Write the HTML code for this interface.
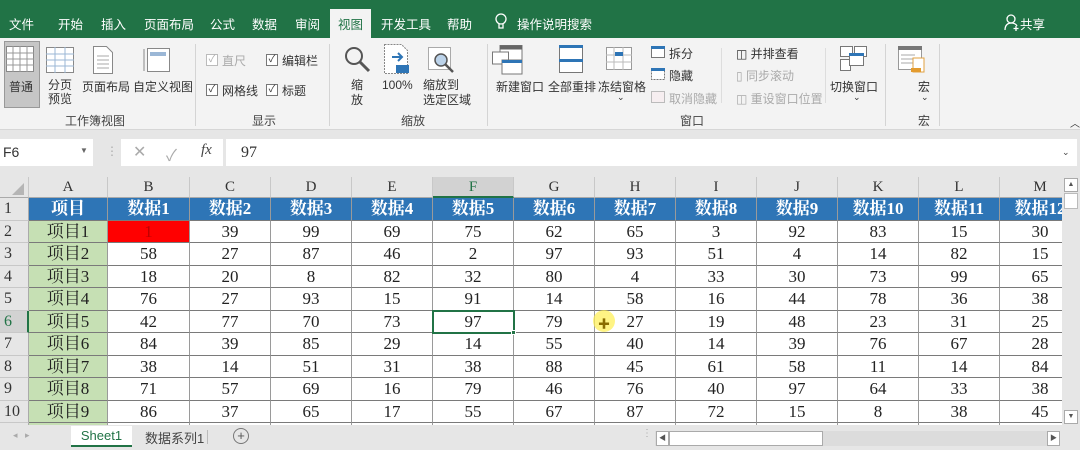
<!DOCTYPE html>
<html><head><meta charset="utf-8">
<style>
*{margin:0;padding:0;box-sizing:border-box}
body{width:1080px;height:450px;overflow:hidden;background:#e6e6e6;position:relative;font-family:"Liberation Sans","Noto Sans CJK SC",sans-serif;}
.a{position:absolute;white-space:nowrap}
.tab{position:absolute;top:14px;font-size:12.5px;color:#fff}
.rb{font-size:12px;color:#333}
.dim{color:#aaa}
.sep{position:absolute;top:44px;width:1px;height:82px;background:#d4d4d4}
.grp{position:absolute;top:112px;font-size:12px;color:#444}
.cb{position:absolute;width:12px;height:12px;border:1px solid #777;background:#fff;font-size:10px;line-height:10px;text-align:center;color:#333}
#grid{position:absolute;left:0;top:177px;width:1062px;height:248px;background:#fff;overflow:hidden}
.c{position:absolute;text-align:center;font-family:"Liberation Serif","Noto Serif CJK SC",serif;font-size:17px;color:#222;border-right:1px solid #9a9a9a;border-bottom:1px solid #7a7a7a;line-height:22px}
.ch{position:absolute;top:0;height:21px;text-align:center;font-family:"Liberation Serif",serif;font-size:15px;color:#333;background:#e6e6e6;border-right:1px solid #c8c8c8;border-bottom:1px solid #aaa;line-height:21px}
.rh{position:absolute;left:0;width:29px;text-align:left;padding-left:4px;font-family:"Liberation Serif",serif;font-size:16px;color:#333;background:#e6e6e6;border-bottom:1px solid #c8c8c8;border-right:1px solid #aaa;line-height:22px}
</style></head><body>
<!-- title / tabs -->
<div class="a" style="left:0;top:0;width:1080px;height:38px;background:#217346"></div>
<div class="a" style="left:330px;top:9px;width:41px;height:30px;background:#f3f3f3"></div>
<div class="tab" style="left:9px">文件</div>
<div class="tab" style="left:58px">开始</div>
<div class="tab" style="left:101px">插入</div>
<div class="tab" style="left:144px">页面布局</div>
<div class="tab" style="left:210px">公式</div>
<div class="tab" style="left:252px">数据</div>
<div class="tab" style="left:295px">审阅</div>
<div class="tab" style="left:330px;color:#217346;width:41px;text-align:center">视图</div>
<div class="tab" style="left:381px">开发工具</div>
<div class="tab" style="left:447px">帮助</div>
<svg class="a" style="left:494px;top:13px" width="14" height="18"><circle cx="7" cy="6" r="5" fill="none" stroke="#fff" stroke-width="1.3"/><path d="M5 11v4h4v-4" fill="none" stroke="#fff" stroke-width="1.3"/></svg>
<div class="tab" style="left:517px">操作说明搜索</div>
<svg class="a" style="left:1004px;top:14px" width="16" height="18"><circle cx="7" cy="5" r="4" fill="none" stroke="#fff" stroke-width="1.3"/><path d="M1 16c0-5 3-7 6-7s5 1 6 3M12 12v5M9.5 14.5h5" fill="none" stroke="#fff" stroke-width="1.3"/></svg>
<div class="tab" style="left:1020px">共享</div>
<!-- ribbon -->
<div class="a" style="left:0;top:38px;width:1080px;height:92px;background:#f3f3f3;border-bottom:1px solid #d6d6d6"></div>
<div class="a" style="left:4px;top:41px;width:36px;height:67px;background:#c6c6c6;border:1px solid #999"></div>
<svg class="a" style="left:6px;top:46px" width="28" height="26"><rect x="0.5" y="0.5" width="27" height="25" fill="#fff" stroke="#888"/><path d="M0 7h28M0 13h28M0 19h28M7 0v26M14 0v26M21 0v26" stroke="#999"/></svg>
<div class="a rb" style="left:9px;top:78px">普通</div>
<svg class="a" style="left:46px;top:47px" width="28" height="26"><rect x="0.5" y="0.5" width="27" height="25" fill="#fff" stroke="#888"/><path d="M0 7h28M0 13h28M0 19h28M9 0v26M19 0v26" stroke="#9bb7d6"/></svg>
<div class="a rb" style="left:48px;top:78px;line-height:14px">分页<br>预览</div>
<svg class="a" style="left:93px;top:46px" width="20" height="28"><path d="M0.5 0.5h13l6 6v21h-19z" fill="#fff" stroke="#888"/><path d="M4 10h12M4 14h12M4 18h12M4 22h12" stroke="#aaa"/></svg>
<div class="a rb" style="left:82px;top:78px">页面布局</div>
<svg class="a" style="left:143px;top:46px" width="28" height="28"><rect x="4.5" y="2.5" width="22" height="23" fill="#fff" stroke="#888"/><rect x="7" y="6" width="16" height="4" fill="#9bb7d6"/><path d="M1 3v22" stroke="#888"/></svg>
<div class="a rb" style="left:133px;top:78px">自定义视图</div>
<div class="grp" style="left:65px">工作簿视图</div>
<div class="sep" style="left:195px"></div>
<div class="cb" style="left:206px;top:54px;border-color:#bbb;color:#aaa">✓</div><div class="a rb dim" style="left:222px;top:52px">直尺</div>
<div class="cb" style="left:266px;top:54px">✓</div><div class="a rb" style="left:282px;top:52px">编辑栏</div>
<div class="cb" style="left:206px;top:84px">✓</div><div class="a rb" style="left:222px;top:82px">网格线</div>
<div class="cb" style="left:266px;top:84px">✓</div><div class="a rb" style="left:282px;top:82px">标题</div>
<div class="grp" style="left:252px">显示</div>
<div class="sep" style="left:329px"></div>
<svg class="a" style="left:344px;top:46px" width="28" height="28"><circle cx="10" cy="10" r="8" fill="none" stroke="#555" stroke-width="2"/><path d="M16 16l9 9" stroke="#555" stroke-width="3"/></svg>
<div class="a rb" style="left:351px;top:78px;line-height:15px">缩<br>放</div>
<svg class="a" style="left:384px;top:44px" width="26" height="30"><path d="M0.5 0.5h17l6 6v23h-23z" fill="#fff" stroke="#888" stroke-dasharray="2 1"/><path d="M8 13h10M14 9l4 4-4 4" stroke="#2e75b6" stroke-width="2" fill="none"/><rect x="12" y="21" width="13" height="8" fill="#2e75b6"/></svg>
<div class="a rb" style="left:382px;top:78px">100%</div>
<svg class="a" style="left:428px;top:47px" width="28" height="28"><rect x="0.5" y="0.5" width="22" height="22" fill="#fff" stroke="#aaa"/><circle cx="13" cy="13" r="6" fill="#bcd3ea" stroke="#555" stroke-width="1.5"/><path d="M17 17l8 8" stroke="#555" stroke-width="2.5"/></svg>
<div class="a rb" style="left:423px;top:78px;line-height:15px">缩放到<br>选定区域</div>
<div class="grp" style="left:401px">缩放</div>
<div class="sep" style="left:487px"></div>
<svg class="a" style="left:492px;top:45px" width="32" height="30"><rect x="8" y="0.5" width="22" height="16" fill="#fff" stroke="#777"/><rect x="8" y="0.5" width="22" height="4" fill="#666"/><rect x="0.5" y="7" width="16" height="12" fill="#fff" stroke="#777"/><rect x="10" y="15" width="20" height="14" fill="#fff" stroke="#777"/><rect x="10" y="15" width="20" height="3" fill="#2e75b6"/></svg>
<div class="a rb" style="left:496px;top:78px">新建窗口</div>
<svg class="a" style="left:559px;top:45px" width="24" height="28"><rect x="0.5" y="0.5" width="23" height="27" fill="#fff" stroke="#777"/><rect x="0" y="0" width="24" height="3" fill="#2e75b6"/><rect x="0" y="14" width="24" height="3" fill="#2e75b6"/></svg>
<div class="a rb" style="left:548px;top:78px">全部重排</div>
<svg class="a" style="left:606px;top:47px" width="28" height="26"><rect x="0.5" y="0.5" width="25" height="22" fill="#fff" stroke="#999"/><path d="M0 8h26M0 15h26M8 0v23M17 0v23" stroke="#bbb"/><rect x="9" y="5" width="8" height="4" fill="#2e75b6"/></svg>
<div class="a rb" style="left:598px;top:78px">冻结窗格</div>
<div class="a rb" style="left:617px;top:92px;font-size:9px">⌄</div>
<svg class="a" style="left:651px;top:46px" width="14" height="12"><rect x="0.5" y="0.5" width="13" height="11" fill="#fff" stroke="#777"/><rect x="0" y="0" width="14" height="3" fill="#2e75b6"/></svg><div class="a rb" style="left:669px;top:45px">拆分</div>
<svg class="a" style="left:651px;top:68px" width="14" height="12"><rect x="0.5" y="0.5" width="13" height="11" fill="#fff" stroke="#777" stroke-dasharray="2 1"/><rect x="0" y="0" width="14" height="3" fill="#2e75b6"/></svg><div class="a rb" style="left:669px;top:67px">隐藏</div>
<svg class="a" style="left:651px;top:91px" width="14" height="12"><rect x="0.5" y="0.5" width="13" height="11" fill="#f6eef0" stroke="#bbb"/></svg><div class="a rb dim" style="left:669px;top:90px">取消隐藏</div>
<div class="a" style="left:721px;top:48px;width:1px;height:55px;background:#ddd"></div>
<div class="a rb" style="left:736px;top:45px">◫ 并排查看</div>
<div class="a rb dim" style="left:736px;top:67px">▯ 同步滚动</div>
<div class="a rb dim" style="left:736px;top:90px">◫ 重设窗口位置</div>
<div class="grp" style="left:680px">窗口</div>
<div class="a" style="left:825px;top:48px;width:1px;height:55px;background:#ddd"></div>
<svg class="a" style="left:840px;top:46px" width="28" height="26"><rect x="0.5" y="0.5" width="12" height="10" fill="#fff" stroke="#777"/><rect x="14.5" y="0.5" width="12" height="10" fill="#fff" stroke="#777"/><rect x="0.5" y="13.5" width="10" height="11" fill="#fff" stroke="#777"/><rect x="9.5" y="7.5" width="14" height="12" fill="#fff" stroke="#777"/><rect x="9" y="7" width="15" height="3" fill="#2e75b6"/></svg>
<div class="a rb" style="left:830px;top:78px">切换窗口</div>
<div class="a rb" style="left:853px;top:92px;font-size:9px">⌄</div>
<div class="sep" style="left:885px"></div>
<svg class="a" style="left:898px;top:46px" width="28" height="28"><rect x="0.5" y="0.5" width="23" height="23" fill="#fff" stroke="#999"/><rect x="0" y="0" width="24" height="4" fill="#777"/><path d="M3 9h14M3 13h14M3 17h12" stroke="#aaa"/><rect x="15" y="12" width="11" height="14" fill="#fff" stroke="#e0a040"/><rect x="13" y="22" width="10" height="4" fill="#e39b2e"/></svg>
<div class="a rb" style="left:918px;top:78px">宏</div>
<div class="a rb" style="left:921px;top:92px;font-size:9px">⌄</div>
<div class="grp" style="left:918px">宏</div>
<div class="sep" style="left:939px"></div>
<div class="a rb" style="left:1070px;top:115px;font-size:10px">︿</div>
<!-- formula bar -->
<div class="a" style="left:0;top:139px;width:93px;height:27px;background:#fff"></div>
<div class="a" style="left:3px;top:144px;font-size:14px;color:#333">F6</div>
<div class="a" style="left:80px;top:146px;font-size:8px;color:#666">▼</div>
<div class="a" style="left:106px;top:144px;font-size:12px;color:#aaa">⋮</div>
<div class="a" style="left:121px;top:139px;width:102px;height:27px;background:#fff"></div>
<div class="a" style="left:133px;top:142px;font-size:16px;color:#aaa">✕</div>
<div class="a" style="left:166px;top:142px;font-size:16px;color:#aaa">✓</div>
<div class="a" style="left:201px;top:142px;font-size:15px;font-style:italic;font-family:'Liberation Serif',serif;color:#444">fx</div>
<div class="a" style="left:226px;top:139px;width:851px;height:27px;background:#fff"></div>
<div class="a" style="left:241px;top:144px;font-size:16px;color:#333;font-family:'Liberation Serif',serif">97</div>
<div class="a" style="left:1062px;top:147px;font-size:9px;color:#444">⌄</div>
<!-- grid -->
<div id="grid"></div>
<!-- vertical scroll -->
<div class="a" style="left:1062px;top:177px;width:18px;height:248px;background:#e6e6e6"></div>
<div class="a" style="left:1064px;top:178px;width:14px;height:14px;background:#fff;border:1px solid #aaa;font-size:7px;text-align:center;line-height:12px;color:#555">▲</div>
<div class="a" style="left:1064px;top:193px;width:14px;height:16px;background:#fff;border:1px solid #bbb"></div>
<div class="a" style="left:1064px;top:410px;width:14px;height:14px;background:#fff;border:1px solid #aaa;font-size:7px;text-align:center;line-height:12px;color:#555">▼</div>
<!-- sheet tabs -->
<div class="a" style="left:0;top:425px;width:1080px;height:25px;background:#e6e6e6"></div>
<div class="a" style="left:13px;top:430px;font-size:9px;color:#aaa">◂ &nbsp; ▸</div>
<div class="a" style="left:71px;top:426px;width:61px;height:21px;background:#fff;border-bottom:2px solid #217346;font-size:13px;color:#217346;text-align:center;line-height:19px">Sheet1</div>
<div class="a" style="left:145px;top:428px;font-size:13px;color:#444">数据系列1</div>
<div class="a" style="left:207px;top:430px;width:1px;height:14px;background:#bbb"></div>
<div class="a" style="left:233px;top:428px;width:16px;height:16px;border:1px solid #777;border-radius:50%;font-size:13px;text-align:center;line-height:13px;color:#555">+</div>
<div class="a" style="left:642px;top:428px;font-size:10px;color:#aaa">⋮</div>
<div class="a" style="left:655px;top:431px;width:400px;height:15px;background:#dcdcdc"></div>
<div class="a" style="left:656px;top:431px;width:13px;height:15px;background:#fff;border:1px solid #aaa;font-size:7px;text-align:center;line-height:13px;color:#555">◀</div>
<div class="a" style="left:669px;top:431px;width:154px;height:15px;background:#fff;border:1px solid #aaa"></div>
<div class="a" style="left:1047px;top:431px;width:13px;height:15px;background:#fff;border:1px solid #aaa;font-size:7px;text-align:center;line-height:13px;color:#555">▶</div>
<script>
var g=document.getElementById('grid');
var cols=['A','B','C','D','E','F','G','H','I','J','K','L','M'];
var xs=[29,108,190,271,352,433,514,595,676,757,838,919,1000,1081];
var ys=[21,44,66,89,111,134,156,179,201,224,246,269];
var data=[
['项目','数据1','数据2','数据3','数据4','数据5','数据6','数据7','数据8','数据9','数据10','数据11','数据12'],
['项目1','1',39,99,69,75,62,65,3,92,83,15,30],
['项目2',58,27,87,46,2,97,93,51,4,14,82,15],
['项目3',18,20,8,82,32,80,4,33,30,73,99,65],
['项目4',76,27,93,15,91,14,58,16,44,78,36,38],
['项目5',42,77,70,73,97,79,27,19,48,23,31,25],
['项目6',84,39,85,29,14,55,40,14,39,76,67,28],
['项目7',38,14,51,31,38,88,45,61,58,11,14,84],
['项目8',71,57,69,16,79,46,76,40,97,64,33,38],
['项目9',86,37,65,17,55,67,87,72,15,8,38,45],
['','','','','','','','','','','','','']];
var h='<div class="ch" style="left:0;width:29px"><svg width="29" height="21"><path d="M24 6v12h-12z" fill="#b5b5b5"/></svg></div>';
for(var i=0;i<13;i++){h+='<div class="ch" style="left:'+xs[i]+'px;width:'+(xs[i+1]-xs[i])+'px;'+(i==5?'background:#d2d2d2;color:#217346;border-bottom:2px solid #217346':'')+'">'+cols[i]+'</div>';}
for(var r=0;r<data.length;r++){
 var y=ys[r],hh=ys[r+1]-y;
 h+='<div class="rh" style="top:'+y+'px;height:'+hh+'px;'+(r==5?'background:#d2d2d2;color:#217346;border-right:2px solid #217346':'')+'">'+(r+1)+'</div>';
 for(var i=0;i<13;i++){
  var st='left:'+xs[i]+'px;top:'+y+'px;width:'+(xs[i+1]-xs[i])+'px;height:'+hh+'px;';
  if(r==0){st+='background:#2e75b6;color:#fff;font-weight:bold;font-family:"Liberation Serif","Noto Sans CJK SC",serif;';}
  else if(i==0){st+='background:#c6e0b4;font-family:"Liberation Serif","Noto Serif CJK SC",serif;';}
  if(r==1&&i==1)st+='background:#ff0000;color:#c00000;';
  h+='<div class="c" style="'+st+'">'+data[r][i]+'</div>';
 }
}
h+='<div style="position:absolute;left:432px;top:133px;width:83px;height:24px;border:2px solid #217346"></div>';
h+='<div style="position:absolute;left:511px;top:153px;width:5px;height:5px;background:#217346;border:1px solid #fff"></div>';
h+='<div style="position:absolute;left:593px;top:133px;width:22px;height:22px;border-radius:50%;background:rgba(255,240,80,.7)"></div>';
h+='<div style="position:absolute;left:598px;top:138px;font-size:12px;color:#8a6d00">✚</div>';
g.innerHTML=h;
</script>
</body></html>
